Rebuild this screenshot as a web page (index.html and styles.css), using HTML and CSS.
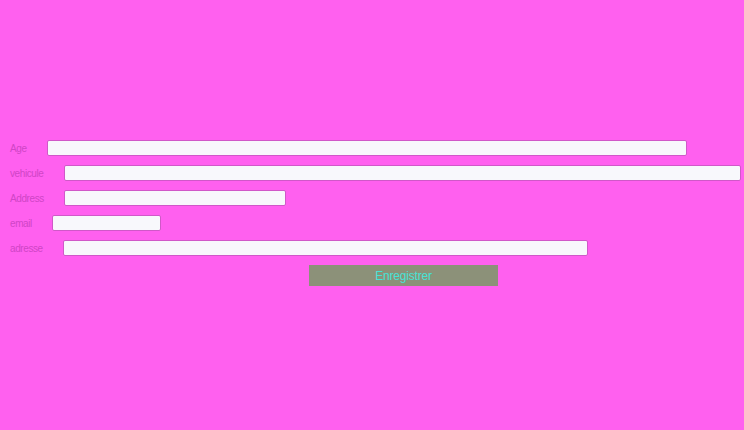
FILE: index.html
```html
<!DOCTYPE html>
<html lang="fr">
<head>
<meta charset="utf-8">
<title>Formulaire</title>
<link rel="stylesheet" href="styles.css">
</head>
<body>
<form class="form">
  <div class="row"><label class="lbl">Age</label><input class="field w-age" type="text"></div>
  <div class="row"><label class="lbl">vehicule</label><input class="field w-veh" type="text"></div>
  <div class="row"><label class="lbl">Address</label><input class="field w-addr" type="text"></div>
  <div class="row"><label class="lbl">email</label><input class="field w-email" type="text"></div>
  <div class="row"><label class="lbl">adresse</label><input class="field w-adr" type="text"></div>
  <div class="actions"><button class="btn" type="button">Enregistrer</button></div>
</form>
</body>
</html>
```
FILE: styles.css
```css
html, body {
  margin: 0;
  padding: 0;
  background: #ff60ef;
  font-family: "Liberation Sans", Arial, sans-serif;
}
.form {
  padding: 140px 0 0 10px;
  display: flex;
  flex-direction: column;
  gap: 9px;
}
.row {
  display: flex;
  align-items: center;
  gap: 20px;
  height: 16px;
}
.lbl {
  font-size: 10px;
  letter-spacing: -0.4px;
  color: #cf45c6;
}
.field {
  box-sizing: border-box;
  height: 16px;
  margin: 0;
  padding: 0 3px;
  background: #f8f8fc;
  border: 1px solid #d058c8;
  border-radius: 2px;
}
.w-age { width: 640px; }
.w-veh { width: 677px; }
.w-addr { width: 222px; }
.w-email { width: 109px; }
.w-adr { width: 525px; }
.actions {
  padding-left: 299px;
}
.btn {
  width: 189px;
  height: 21px;
  margin: 0;
  border: none;
  background: #8c9179;
  color: #46e3d6;
  font-family: "Liberation Sans", Arial, sans-serif;
  font-size: 12px;
  letter-spacing: -0.2px;
}
```
